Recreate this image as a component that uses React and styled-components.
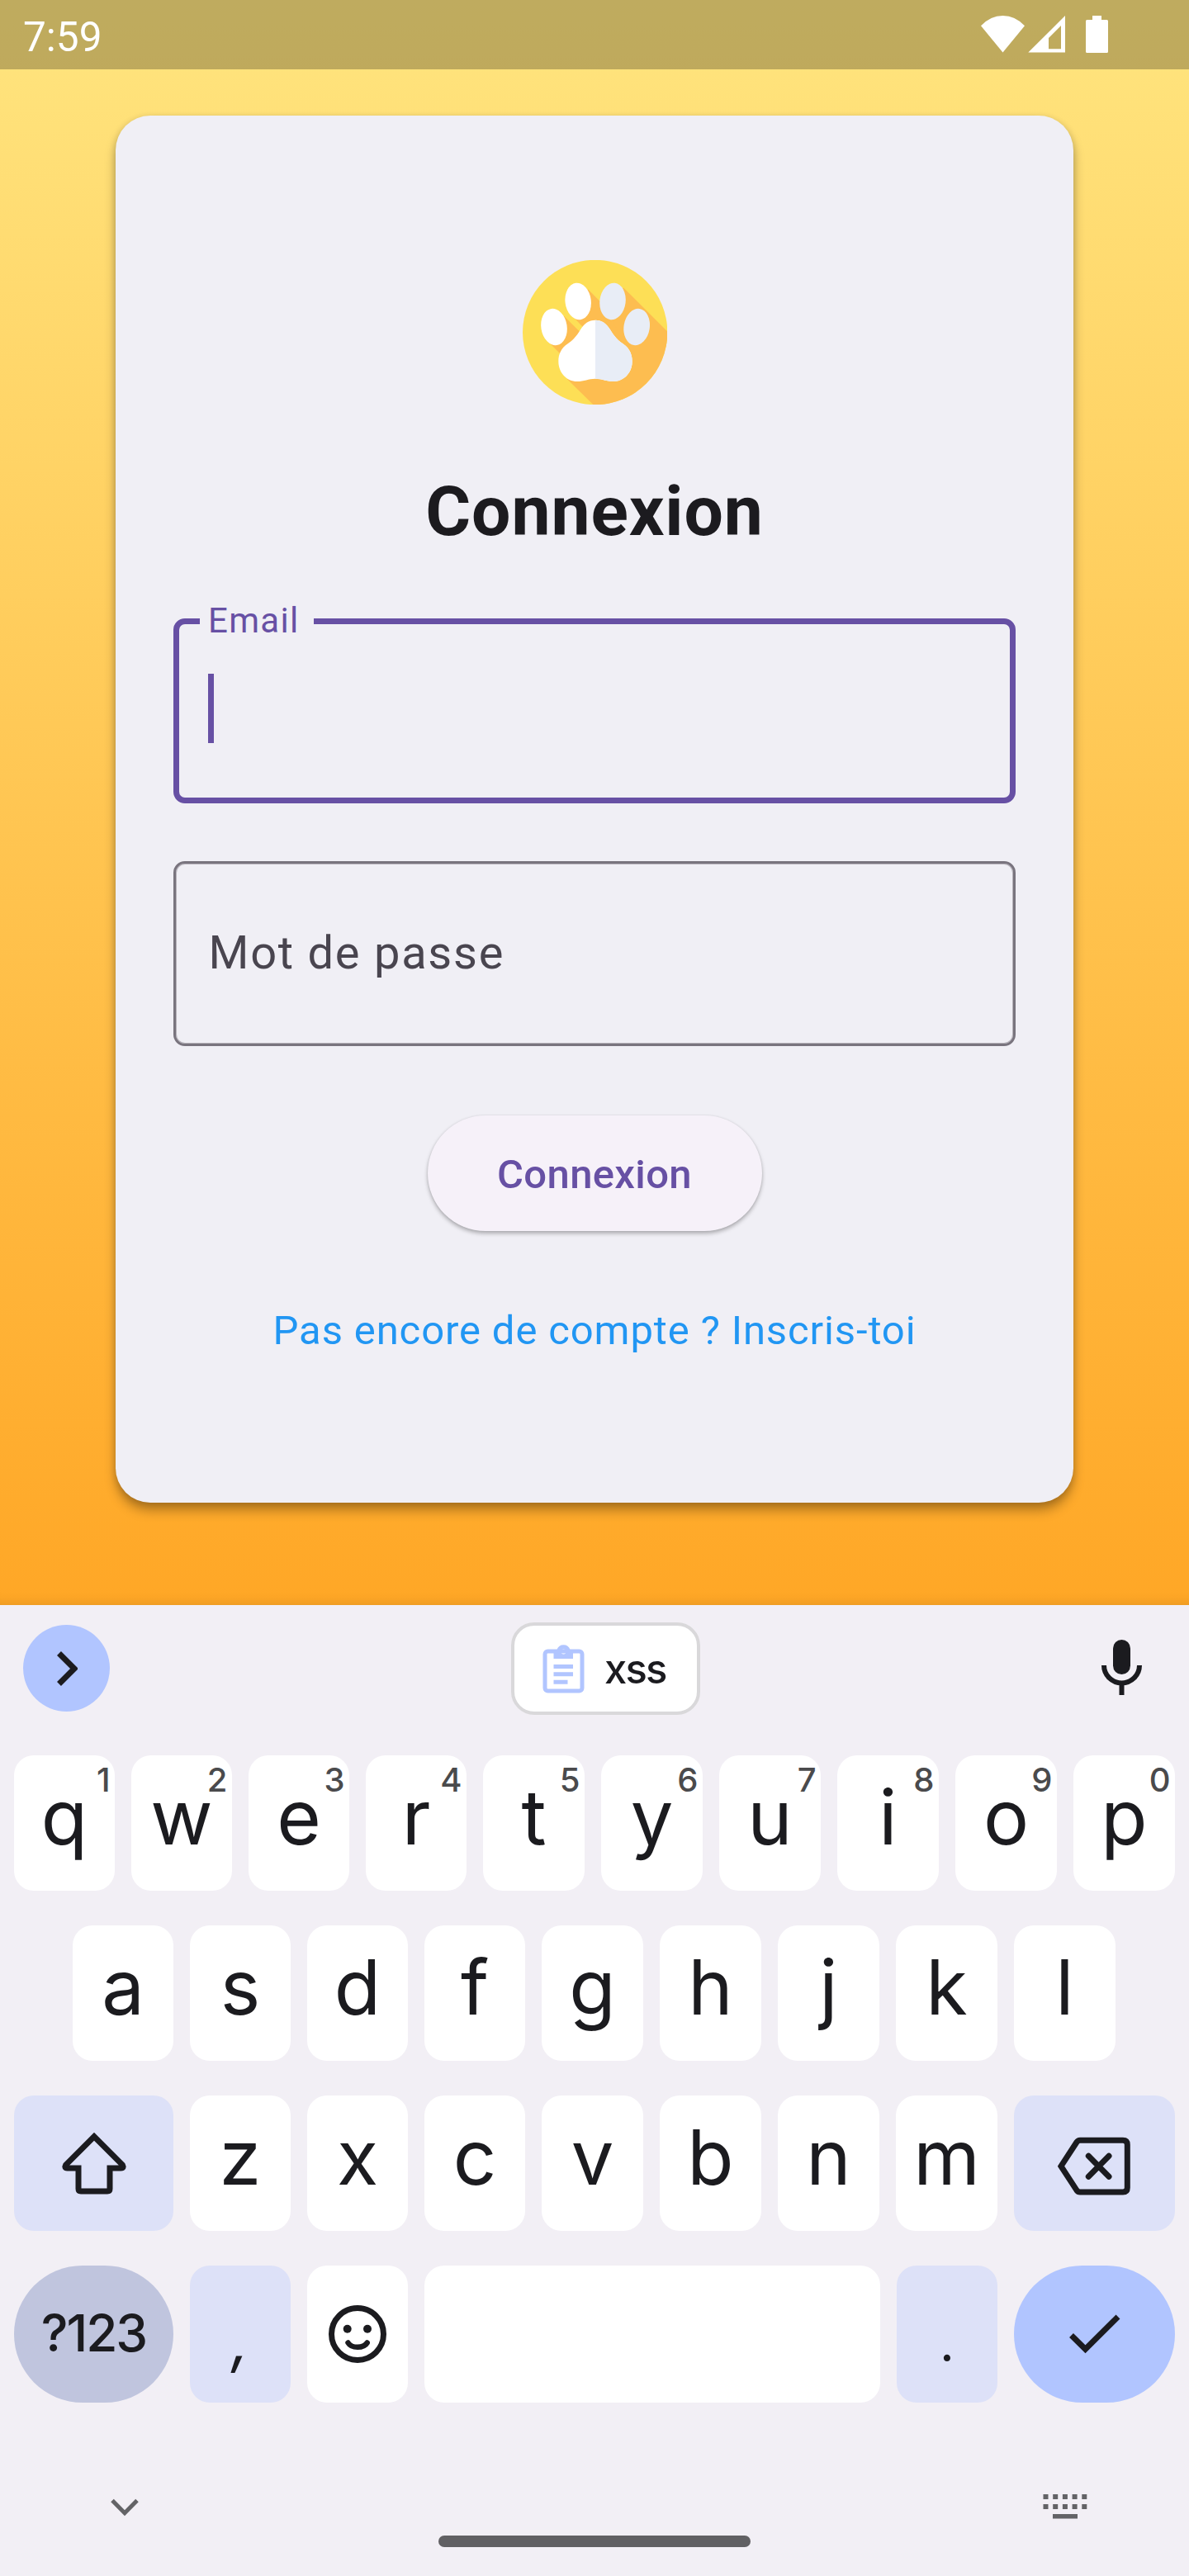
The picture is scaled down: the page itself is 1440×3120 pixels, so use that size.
import React from 'react';
import styled, { createGlobalStyle } from 'styled-components';

const GlobalStyle = createGlobalStyle`
  * { box-sizing: border-box; }
  body { margin: 0; background: #f2eff5; }
  button { font: inherit; border: 0; padding: 0; margin: 0; background: none; }
  svg { display: block; flex: none; }
`;

const INK = '#1b1b1f';
const PURPLE = '#6750a4';
const SURFACE = '#f0eff5';

const Screen = styled.div`
  width: 1440px;
  height: 3120px;
  display: flex;
  flex-direction: column;
  font-family: Roboto, "Noto Sans", sans-serif;
  overflow: hidden;
`;

const LoginPage = styled.main`
  height: 1944px;
  flex: none;
  display: flex;
  flex-direction: column;
  align-items: center;
  background: linear-gradient(180deg, #ffe57f 0%, #ffa726 100%);
  box-shadow: inset 0 -14px 14px -12px rgba(0, 0, 0, 0.1);
`;

const StatusBar = styled.header`
  width: 100%;
  height: 84px;
  flex: none;
  display: flex;
  align-items: flex-start;
  justify-content: space-between;
  padding: 0 98px 0 28px;
  background: rgba(0, 0, 0, 0.25);
  color: #fff;
`;

const Clock = styled.span`
  padding-top: 3px;
  font-size: 49.5px;
  line-height: 84px;
`;

const StatusIcons = styled.div`
  display: flex;
  padding-top: 19px;
`;

const Signal = styled.span`
  margin: 0 25px 0 4px;
`;

const Card = styled.section`
  width: 1160px;
  height: 1680px;
  margin-top: 56px;
  padding: 175px 70px 0;
  display: flex;
  flex-direction: column;
  align-items: center;
  border-radius: 42px;
  background: ${SURFACE};
  box-shadow: 0 10px 14px rgba(0, 0, 0, 0.28), 0 2px 8px rgba(0, 0, 0, 0.14);
`;

const Title = styled.h1`
  margin: 81px 0 80px;
  font-size: 84px;
  line-height: 98px;
  font-weight: 700;
  letter-spacing: 0.9px;
  color: #1c1b1f;
`;

const Field = styled.div`
  position: relative;
  width: 1020px;
  height: 224px;
  display: flex;
  align-items: center;
  padding-left: ${(p) => (p.$focused ? '42px' : '42.5px')};
  margin-bottom: ${(p) => (p.$focused ? '70px' : '84px')};
  border: ${(p) => (p.$focused ? `7px solid ${PURPLE}` : '3px solid #79747e')};
  border-radius: 14px;
  box-shadow: ${(p) => (p.$focused ? 'none' : 'inset 0 0 0 1px rgba(121, 116, 126, 0.5)')};
`;

const FloatingLabel = styled.label`
  position: absolute;
  left: 25px;
  top: -29px;
  width: 138px;
  padding-left: 10px;
  background: ${SURFACE};
  color: ${PURPLE};
  font-size: 42px;
  line-height: 50px;
  letter-spacing: 1.3px;
`;

const Caret = styled.span`
  width: 7px;
  height: 84px;
  margin: -6px 0 0 -7px;
  background: ${PURPLE};
`;

const Placeholder = styled.span`
  padding-bottom: 2px;
  margin-left: -3px;
  font-size: 56px;
  line-height: 66px;
  letter-spacing: 1.75px;
  color: #49454f;
`;

const SubmitButton = styled.button`
  width: 405px;
  height: 140px;
  padding-top: 2px;
  border-radius: 70px;
  background: #f6f1f9;
  color: ${PURPLE};
  font-size: 49px;
  font-weight: 500;
  letter-spacing: 0.35px;
  box-shadow: 0 3px 5px rgba(0, 0, 0, 0.28), 0 0 3px rgba(0, 0, 0, 0.08);
`;

const SignUpLink = styled.a`
  margin-top: 86px;
  font-size: 49px;
  line-height: 70px;
  letter-spacing: 0.875px;
  color: #2196f3;
  white-space: nowrap;
`;

const Keyboard = styled.section`
  flex: 1;
  display: flex;
  flex-direction: column;
  background: #f2eff5;
  color: ${INK};
  font-family: Inter, "Noto Sans", sans-serif;
`;

const SuggestionStrip = styled.div`
  display: flex;
  align-items: center;
  justify-content: space-between;
  height: 112px;
  margin: 21px 0 49px;
  padding: 0 57px 0 28px;
`;

const ExpandButton = styled.button`
  width: 105px;
  height: 105px;
  margin-bottom: 1px;
  display: flex;
  align-items: center;
  justify-content: center;
  border-radius: 50%;
  background: #b1c5ff;
`;

const ClipChip = styled.button`
  width: 229px;
  height: 112px;
  display: flex;
  align-items: center;
  padding-left: 34px;
  gap: 24px;
  border: 4px solid #d9d8da;
  border-radius: 28px;
  background: #fff;
  color: ${INK};
  font-size: 49px;
  font-weight: 500;
  letter-spacing: -1.8px;
`;

const MicButton = styled.button`
  padding-bottom: 3px;
`;

const Keys = styled.div`
  display: flex;
  flex-direction: column;
  gap: 42px;
`;

const KeyRow = styled.div`
  display: flex;
  gap: 20px;
  padding: 0 ${(p) => p.$inset || 17}px;
`;

const keyTones = {
  plain: '#ffffff',
  soft: '#dde1f8',
  mode: '#c0c5de',
  action: '#b1c5ff',
};

const KeyCap = styled.button`
  position: relative;
  flex: ${(p) => (p.$width ? `0 0 ${p.$width}px` : '1 1 0')};
  height: ${(p) => p.$height || 164}px;
  display: flex;
  justify-content: center;
  align-items: ${(p) => (p.$icon ? 'center' : 'flex-start')};
  padding-top: ${(p) => p.$drop || 0}px;
  border-radius: ${(p) => (p.$pill ? 83 : 24)}px;
  background: ${(p) => keyTones[p.$tone || 'plain']};
  color: ${INK};
`;

const Letter = styled.span`
  padding-top: 25px;
  font-size: 92px;
  line-height: 100px;
`;

const Punctuation = styled.span`
  padding-top: 64px;
  font-size: ${(p) => (p.$slanted ? 74 : 62)}px;
  line-height: ${(p) => (p.$slanted ? 52 : 60)}px;
  font-style: ${(p) => (p.$slanted ? 'italic' : 'normal')};
`;

const ModeLabel = styled.span`
  padding-top: 51px;
  font-size: 62px;
  line-height: 62px;
  font-weight: 500;
  letter-spacing: -2px;
`;

const Hint = styled.span`
  position: absolute;
  right: 6px;
  top: 10px;
  font-size: 40px;
  line-height: 40px;
  font-weight: 500;
  letter-spacing: -0.5px;
  color: #4a4a4c;
`;

const NavArea = styled.footer`
  flex: 1;
  display: flex;
  flex-direction: column;
  align-items: center;
  padding: 111px 123px 35px 134px;
`;

const NavRow = styled.div`
  width: 100%;
  display: flex;
  justify-content: space-between;
  align-items: flex-start;
`;

const HomeHandle = styled.div`
  width: 378px;
  height: 14px;
  margin: auto 0 0 -11px;
  border-radius: 7px;
  background: #616063;
`;

const NavIcon = styled.span`
  padding-top: ${(p) => p.$drop || 0}px;
`;

const stroke = { fill: 'none', stroke: INK, strokeWidth: 7 };

const WifiIcon = () => (
  <svg width="53" height="45" viewBox="1188 19 53 45" fill="#fff">
    <path d="M1214.5 63.5L1188 31.3Q1199.5 19 1214.5 19T1241 31.3Z" />
  </svg>
);

const SignalIcon = () => (
  <svg width="45" height="45" viewBox="1245 19 45 45" fill="#fff" fillRule="evenodd">
    <path d="M1290 19V63.5H1245.3ZM1285 31L1270 46V59.3H1285Z" />
  </svg>
);

const BatteryIcon = () => (
  <svg width="27" height="45" viewBox="1315 19 27 45" fill="#fff">
    <path d="M1323 19H1334V24H1340.5Q1342 24 1342 25.5V62.5Q1342 64 1340.5 64H1316.5Q1315 64 1315 62.5V25.5Q1315 24 1316.5 24H1323Z" />
  </svg>
);

const PAD =
  'M360 293C336 293 319 306 306 328C291 353 277 368 260 379C236 395 226 417 226 443C226 484 256 516 294 516C319 516 335 506 360 506C385 506 401 516 426 516C464 516 494 484 494 443C494 417 484 395 460 379C443 368 429 353 414 328C401 306 384 293 360 293Z';

const PawLogo = () => (
  <svg width="175" height="175" viewBox="96 75 525 525">
    <defs>
      <clipPath id="disc"><circle cx="359" cy="337.5" r="263" /></clipPath>
      <clipPath id="rightHalf"><rect x="360" y="280" width="160" height="250" /></clipPath>
    </defs>
    <g clipPath="url(#disc)">
      <rect x="96" y="75" width="526" height="526" fill="#fddf56" />
      <g fill="#fdbd50">
        <path d="M463 176L621 334V600H352L258 508L345 400L400 300L380 228Z" />
        <path d="M333 181L395 243L440 330L345 350L281 283Z" />
        <path d="M246 278L320 352L240 423L192 375Z" />
      </g>
    </g>
    <g fill="#fff">
      <ellipse cx="210" cy="318" rx="47" ry="67" transform="rotate(-9 210 318)" />
      <ellipse cx="297.5" cy="225" rx="47" ry="67" transform="rotate(-7 297.5 225)" />
      <path d={PAD} />
    </g>
    <g fill="#e8edf6">
      <ellipse cx="423" cy="225" rx="47" ry="67" transform="rotate(7 423 225)" />
      <ellipse cx="510.5" cy="318" rx="47" ry="67" transform="rotate(9 510.5 318)" />
      <path d={PAD} clipPath="url(#rightHalf)" />
    </g>
  </svg>
);

const ExpandIcon = () => (
  <svg width="26" height="42" viewBox="68 2000 26 42">
    <path d="M71.5 2002.5L90 2021L71.5 2039.5" {...stroke} />
  </svg>
);

const ClipboardIcon = () => (
  <svg width="51" height="59" viewBox="656.5 1992 51 59" fill="#b1c5ff">
    <rect x="659.5" y="2000" width="45" height="48" rx="3.5" fill="none" stroke="#b1c5ff" strokeWidth="5" />
    <path fillRule="evenodd" d="M670 2009V1998H674A8.5 8.5 0 0 1 690 1998H693.5V2009ZM682 1997.5A3 3 0 1 0 682 2003.5A3 3 0 1 0 682 1997.5Z" />
    <path d="M670 2016H693.5V2021H670ZM670 2025.3H693.5V2030.3H670ZM670 2034.7H687V2039.7H670Z" />
  </svg>
);

const MicIcon = () => (
  <svg width="49" height="68" viewBox="1334 1986 49 68">
    <rect x="1348" y="1986" width="21" height="42" rx="10.5" fill={INK} />
    <path d="M1337 2017A21.5 21.5 0 0 0 1380 2017M1358.5 2038V2053" {...stroke} strokeWidth="6" />
  </svg>
);

const ShiftIcon = () => (
  <svg width="80" height="78" viewBox="73 2580 80 78">
    <path
      d="M113 2586.7L78.7 2621Q76.5 2625 80.5 2625H94V2650Q94 2653 97 2653H129Q132 2653 132 2650V2625H145.5Q149.5 2625 147.3 2621Z"
      {...stroke}
    />
  </svg>
);

const BackspaceIcon = () => (
  <svg width="90" height="72" viewBox="1280 2588 90 72">
    <path
      d="M1284 2623.7L1303 2594.5Q1304.5 2592.3 1307 2592.3H1359Q1364.3 2592.3 1364.3 2597.6V2649.8Q1364.3 2655 1359 2655H1307Q1304.5 2655 1303 2652.9Z"
      {...stroke}
    />
    <path d="M1317.3 2611.3L1342 2636.3M1342 2611.3L1317.3 2636.3" {...stroke} strokeLinecap="round" />
  </svg>
);

const SmileIcon = () => (
  <svg width="70" height="70" viewBox="398 2792 70 70">
    <circle cx="433" cy="2827" r="31.5" {...stroke} />
    <circle cx="420.7" cy="2820.7" r="5" fill={INK} />
    <circle cx="445" cy="2820.7" r="5" fill={INK} />
    <path d="M421.5 2837.5C425.5 2844.5 440.5 2844.5 444.7 2837.5" {...stroke} strokeWidth="6.5" strokeLinecap="round" />
  </svg>
);

const CheckIcon = () => (
  <svg width="64" height="48" viewBox="1294 2804 64 48">
    <path d="M1297.5 2829.5L1314.5 2846.3L1354 2807" {...stroke} />
  </svg>
);

const CollapseIcon = () => (
  <svg width="34" height="23" viewBox="134 3026 34 23">
    <path d="M136 3028.5L151 3043.7L166 3028.5" fill="none" stroke="#636366" strokeWidth="5" />
  </svg>
);

const KeyboardIcon = () => (
  <svg width="54" height="30" viewBox="1263 3021 54 30" fill="#636366">
    {[3021, 3033].map((y) =>
      [0, 1, 2, 3, 4].map((i) => <rect key={`${y}-${i}`} x={1263.5 + i * 11.7} y={y} width="6" height="6" />)
    )}
    <rect x="1275" y="3045" width="30" height="5.5" />
  </svg>
);

const LetterKey = ({ char, hint, width }) => (
  <KeyCap $width={width}>
    <Letter>{char}</Letter>
    {hint && <Hint>{hint}</Hint>}
  </KeyCap>
);

export default function App() {
  return (
    <Screen>
      <GlobalStyle />
      <LoginPage>
        <StatusBar>
          <Clock>7:59</Clock>
          <StatusIcons>
            <WifiIcon />
            <Signal><SignalIcon /></Signal>
            <BatteryIcon />
          </StatusIcons>
        </StatusBar>
        <Card>
          <PawLogo />
          <Title>Connexion</Title>
          <Field $focused>
            <FloatingLabel>Email</FloatingLabel>
            <Caret />
          </Field>
          <Field>
            <Placeholder>Mot de passe</Placeholder>
          </Field>
          <SubmitButton>Connexion</SubmitButton>
          <SignUpLink>Pas encore de compte ? Inscris-toi</SignUpLink>
        </Card>
      </LoginPage>

      <Keyboard>
        <SuggestionStrip>
          <ExpandButton><ExpandIcon /></ExpandButton>
          <ClipChip>
            <ClipboardIcon />
            xss
          </ClipChip>
          <MicButton><MicIcon /></MicButton>
        </SuggestionStrip>
        <Keys>
          <KeyRow>
            {[...'qwertyuiop'].map((c, i) => (
              <LetterKey key={c} char={c} hint={String((i + 1) % 10)} width={i < 4 ? 122 : 123} />
            ))}
          </KeyRow>
          <KeyRow $inset={88}>
            {[...'asdfghjkl'].map((c, i) => <LetterKey key={c} char={c} width={i < 4 ? 122 : 123} />)}
          </KeyRow>
          <KeyRow>
            <KeyCap $width={193} $tone="soft" $icon><ShiftIcon /></KeyCap>
            {[...'zxcvbnm'].map((c, i) => <LetterKey key={c} char={c} width={i < 3 ? 122 : 123} />)}
            <KeyCap $width={195} $tone="soft" $icon $drop={7}><BackspaceIcon /></KeyCap>
          </KeyRow>
          <KeyRow>
            <KeyCap $width={193} $height={166} $tone="mode" $pill><ModeLabel>?123</ModeLabel></KeyCap>
            <KeyCap $width={122} $height={166} $tone="soft"><Punctuation $slanted>,</Punctuation></KeyCap>
            <KeyCap $width={122} $height={166} $icon><SmileIcon /></KeyCap>
            <KeyCap $height={166} />
            <KeyCap $width={122} $height={166} $tone="soft"><Punctuation>.</Punctuation></KeyCap>
            <KeyCap $width={195} $height={166} $tone="action" $pill $icon><CheckIcon /></KeyCap>
          </KeyRow>
        </Keys>
        <NavArea>
          <NavRow>
            <NavIcon $drop={5}><CollapseIcon /></NavIcon>
            <KeyboardIcon />
          </NavRow>
          <HomeHandle />
        </NavArea>
      </Keyboard>
    </Screen>
  );
}
